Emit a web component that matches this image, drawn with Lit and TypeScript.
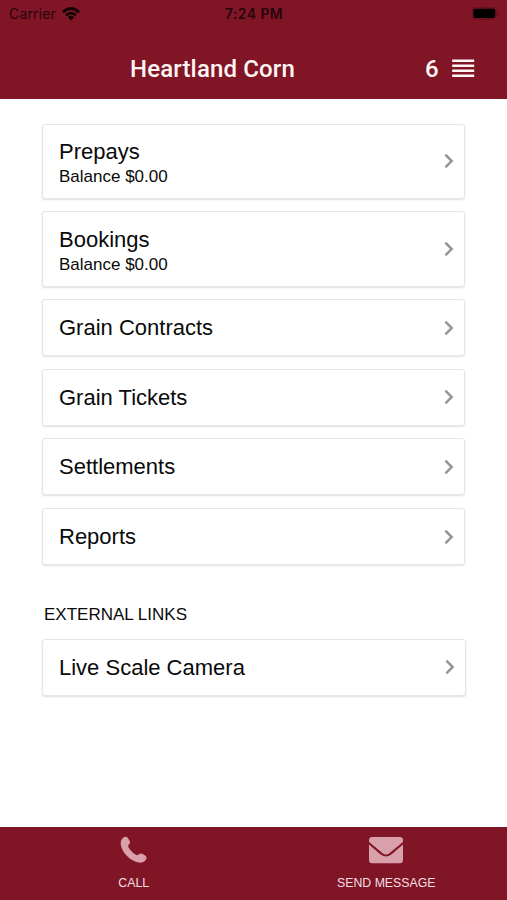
import { LitElement, html, css, svg, nothing } from "lit";
import { customElement, property } from "lit/decorators.js";

@customElement("status-bar")
class StatusBar extends LitElement {
  static styles = css`
    :host {
      display: grid;
      grid-template-columns: 1fr auto 1fr;
      align-items: center;
      height: 28px;
      padding: 0 5px 0 9px;
      font: 400 14px/28px Inter, sans-serif;
      color: #26050b;
    }
    .carrier { display: flex; align-items: center; gap: 6px; letter-spacing: 0.15px; }
    .time { font-weight: 600; font-size: 13.8px; letter-spacing: 0.5px; margin-right: 3px; }
    .battery { justify-self: end; display: block; }
    svg { display: block; }
  `;
  render() {
    return html`
      <div class="carrier">
        <span>Carrier</span>
        <svg width="18" height="14" viewBox="0 0 18 14">
          <path fill="none" stroke="#120205" stroke-width="2.7" d="M1 5.2Q9-2.2 17 5.2M3.9 8.3Q9 3.8 14.1 8.3" />
          <path fill="#120205" d="M5.9 10.3Q9 7.4 12.1 10.3L9 13.5Z" />
        </svg>
      </div>
      <span class="time">7:24 PM</span>
      <svg class="battery" width="31" height="14" viewBox="0 0 31 14">
        <rect x="1.3" y=".7" width="24" height="11.4" rx="3.2" fill="none" stroke="#620f1e" stroke-width="1" />
        <rect x="2.4" y="1.7" width="21.8" height="9.2" rx="1.8" fill="#000" />
        <path d="M26.8 4.6v4q1.5-.6 1.5-2T26.8 4.6Z" fill="#620f1e" />
      </svg>
    `;
  }
}

@customElement("link-card")
class LinkCard extends LitElement {
  @property() label = "";
  @property() detail = "";
  static styles = css`
    :host {
      box-sizing: border-box;
      display: flex;
      align-items: center;
      justify-content: space-between;
      height: 57px;
      padding: 0 9px 0 16px;
      border: 1.5px solid #e6e6e6;
      border-radius: 3px;
      background: #fff;
      box-shadow: 0 1px 2px rgba(0, 0, 0, 0.12);
      color: #0a0a0a;
      font-family: "Liberation Sans", Arial, sans-serif;
    }
    :host([detail]) { height: 75.3px; }
    :host([detail]) .text { padding-top: 3px; }
    .text { padding-top: 1px; }
    .label { font-size: 22px; line-height: 26px; }
    .detail { font-size: 17px; line-height: 20px; margin-top: 2px; }
    svg { display: block; }
  `;
  render() {
    return html`
      <div class="text">
        <div class="label">${this.label}</div>
        ${this.detail ? html`<div class="detail">${this.detail}</div>` : nothing}
      </div>
      <svg width="11" height="16" viewBox="0 0 11 16">
        <path d="M1.4 1.7L7.7 8L1.4 14.3" fill="none" stroke="#969696" stroke-width="2.5" />
      </svg>
    `;
  }
}

const phone = svg`<path d="M3.4 1.6C5 .3 6.8.5 7.9 2.1L9.4 4.5C10.3 6 10 7.5 8.9 8.6C8 9.5 8 10.3 8.6 11.4C10.3 14.3 12.9 17 16 18.8C17 19.4 17.8 19.2 18.6 18.4C19.8 17.3 21.3 17.2 22.7 18.1L25.1 19.6C26.8 20.7 27 22.5 25.7 24C24 26 21.6 27 19 26.6C10.3 25.3 2 16.8.7 8.3C.4 5.8 1.4 3.2 3.4 1.6Z"/>`;
const envelope = svg`<path d="M3.3 0H30.7Q34 0 34 3.3V4.8C29 9.1 24.5 13 20.7 16Q17 19 13.3 16C9.5 13 5 9.1 0 4.8V3.3Q0 0 3.3 0Z"/><path d="M0 7.4C4.3 11.1 8 14.6 11.7 17.6Q17 21.6 22.3 17.6C26 14.6 29.7 11.1 34 7.4V22.9Q34 26.2 30.7 26.2H3.3Q0 26.2 0 22.9Z"/>`;

@customElement("app-root")
class AppRoot extends LitElement {
  static styles = css`
    :host {
      display: flex;
      flex-direction: column;
      height: 900px;
      background: #fff;
      font-family: "Liberation Sans", Arial, sans-serif;
    }
    .top { height: 98.5px; background: #801526; box-sizing: border-box; }
    .nav {
      display: grid;
      grid-template-columns: 1fr 82px;
      align-items: center;
      height: 69px;
      padding-top: 12px;
      box-sizing: border-box;
      color: #fff5f5;
      font: 500 24px/48px Roboto, sans-serif;
    }
    .title { text-align: center; letter-spacing: 0.15px; }
    .actions { display: flex; align-items: center; justify-content: space-between; width: 50px; }
    .content { flex: 1; padding: 25px 42px 0 42px; }
    .list { display: flex; flex-direction: column; gap: 12.6px; }
    .heading { margin: 39px 0 13.5px 2px; font-size: 17px; line-height: 21px; color: #0a0a0a; }
    .external { margin-right: -1px; }
    .tabs { display: grid; grid-template-columns: 1fr 1fr; height: 73px; background: #801526; }
    .tab { display: flex; flex-direction: column; align-items: center; color: #f7dfe3; font-size: 12.3px; }
    .call { padding-left: 14px; }
    .message { padding-left: 12px; }
    .glyph { height: 45px; display: flex; align-items: center; }
    .message .glyph { padding-top: 2px; height: 43px; }
    .caption { line-height: 22px; }
    svg { display: block; fill: #d9a0ac; }
    .menu { fill: #fff5f5; }
  `;
  render() {
    const items = [
      ["Prepays", "Balance $0.00"],
      ["Bookings", "Balance $0.00"],
      ["Grain Contracts"],
      ["Grain Tickets"],
      ["Settlements"],
      ["Reports"],
    ];
    return html`
      <header class="top">
        <status-bar></status-bar>
        <div class="nav">
          <div class="title">Heartland Corn</div>
          <div class="actions">
            <span>6</span>
            <svg class="menu" width="23" height="19" viewBox="0 0 23 19">
              <path d="M.2.5h22v2.5h-22zM.2 5.5h22v2.5h-22zM.2 10.5h22v2.5h-22zM.2 15.5h22v2.5h-22z" />
            </svg>
          </div>
        </div>
      </header>
      <main class="content">
        <div class="list">
          ${items.map(([label, detail]) =>
            detail
              ? html`<link-card label=${label} detail=${detail}></link-card>`
              : html`<link-card label=${label}></link-card>`
          )}
        </div>
        <div class="heading">EXTERNAL LINKS</div>
        <link-card class="external" label="Live Scale Camera"></link-card>
      </main>
      <footer class="tabs">
        <div class="tab call">
          <div class="glyph"><svg width="28" height="28" viewBox="0 0 28 28">${phone}</svg></div>
          <span class="caption">CALL</span>
        </div>
        <div class="tab message">
          <div class="glyph"><svg width="34" height="27" viewBox="0 0 34 27">${envelope}</svg></div>
          <span class="caption">SEND MESSAGE</span>
        </div>
      </footer>
    `;
  }
}
